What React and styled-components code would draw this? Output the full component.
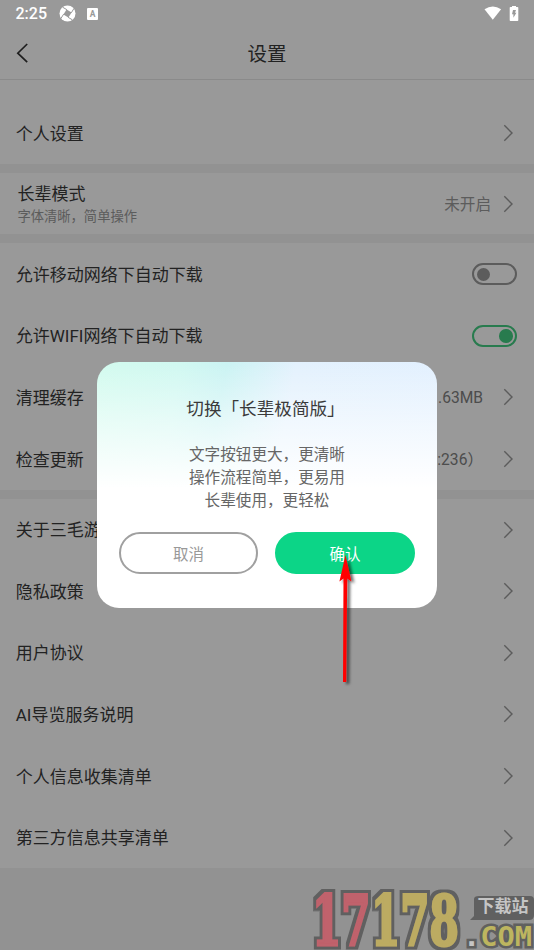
import React from 'react';
import styled, { createGlobalStyle } from 'styled-components';

const Global = createGlobalStyle`
  * { box-sizing: border-box; }
  body { margin: 0; background: #f3f3f3; font-family: Roboto, "Noto Sans CJK SC", sans-serif; color: #3a3a3a; }
`;
const Screen = styled.div`
  position: relative; width: 534px; height: 950px; overflow: hidden; background: #f3f3f3;
`;
const StatusBar = styled.div`
  position: relative; z-index: 3; height: 27px; padding: 0 15px 0 15.5px;
  display: flex; align-items: center; justify-content: space-between; color: #fff;
`;
const StatusGroup = styled.div`display: flex; align-items: center; gap: ${p => p.$gap}px;`;
const Clock = styled.span`font-size: 16px; font-weight: 500; line-height: 27px;`;
const Top = styled.div`background: #fff; height: 80px; border-bottom: 1px solid #e6e6e6;`;
const Header = styled.header`
  height: 52px; padding: 0 16px; display: grid; grid-template-columns: 20px 1fr 20px; align-items: center;
`;
const Title = styled.h1`margin: 0; padding-top: 3px; font-size: 19.5px; font-weight: 400; line-height: 28px; text-align: center;`;
const Section = styled.section`
  background: #fff; padding-top: ${p => p.$top || 0}px; margin-bottom: 9px;
`;
const Row = styled.div`
  height: ${p => p.$h || 61.6}px; padding: 0 17px 0 ${p => p.$left || 15.7}px;
  display: flex; align-items: center; justify-content: space-between;
`;
const Label = styled.div`padding-top: 1px; font-size: 17px; line-height: 24px; white-space: nowrap;`;
const Hint = styled.div`font-size: 13.3px; line-height: 21px; color: #999;`;
const Tail = styled.div`display: flex; align-items: center; gap: ${p => p.$gap || 12}px; padding-right: 3px;`;
const Value = styled.span`padding-top: 2px; font-size: 15.6px; line-height: 22px; color: ${p => (p.$soft ? '#999' : '#808080')};`;
const Switch = styled.div`
  width: 45px; height: 22px; border-radius: 11px; border: 2px solid ${p => (p.$on ? '#43cd82' : '#999')};
  padding: 0 2.5px; display: flex; align-items: center; justify-content: ${p => (p.$on ? 'flex-end' : 'flex-start')};
`;
const Knob = styled.div`width: 13.5px; height: 13.5px; border-radius: 50%; background: ${p => (p.$on ? '#43cd82' : '#999')};`;
const Overlay = styled.div`
  position: absolute; inset: 0; z-index: 2; background: rgba(0,0,0,.4);
  display: flex; justify-content: center; align-items: flex-start; padding-top: 362px;
`;
const Dialog = styled.div`
  width: 340px; height: 246px; border-radius: 22px; padding: 33px 22px 0;
  background:
    linear-gradient(to bottom, rgba(255,255,255,0) 0, rgba(255,255,255,.5) 60px, #fff 126px),
    linear-gradient(100deg, #d2fbee 0, #d0f8f1 22%, #caf3f3 34%, #e3f1fd 52%, #e2f0ff 100%);
`;
const DialogTitle = styled.h2`margin: 0; padding-right: 3px; font-size: 17.6px; line-height: 28px; font-weight: 400; text-align: center;`;
const DialogText = styled.p`margin: 21px 0 19px; font-size: 15.6px; line-height: 23px; color: #666; text-align: center;`;
const Actions = styled.div`display: flex; gap: 17px;`;
const Button = styled.button`
  flex: ${p => (p.$primary ? '0 0 140px' : '0 0 139px')}; height: 42px; border-radius: 21px; padding: 3px 0 0;
  font: 15.5px/22px Roboto, "Noto Sans CJK SC", sans-serif;
  border: 2px solid ${p => (p.$primary ? '#0cd587' : '#a0a0a0')};
  background: ${p => (p.$primary ? '#0cd587' : '#fff')}; color: ${p => (p.$primary ? '#fff' : '#999')};
`;
const Pointer = styled.svg`position: absolute; z-index: 4; left: 332px; top: 550px;`;
const Watermark = styled.svg`position: absolute; z-index: 4; left: 304px; top: 884px;`;

const Chevron = () => (
  <svg width="11" height="18" viewBox="0 0 11 18" fill="none" stroke="#999" strokeWidth="1.4"><path d="M1.3 1.3 9 9l-7.7 7.7" /></svg>
);

const Item = ({ label, value, gap, soft, hint, h, left }) => (
  <Row $h={h} $left={left}>
    <div><Label>{label}</Label>{hint && <Hint>{hint}</Hint>}</div>
    <Tail $gap={gap}>{value && <Value $soft={soft}>{value}</Value>}<Chevron /></Tail>
  </Row>
);
const Toggle = ({ label, on }) => (
  <Row><Label>{label}</Label><Switch $on={on}><Knob $on={on} /></Switch></Row>
);

const LogoDigits = ({ x, color, children }) => (
  <text transform={`translate(${x} 61) scale(.61 1)`} fontFamily="DejaVu Serif" fontWeight="700" fontSize="69"
    fill={color} stroke={color} strokeWidth="3" strokeLinejoin="miter">{children}</text>
);

export default function App() {
  return (
    <Screen>
      <Global />
      <Top>
        <StatusBar>
          <StatusGroup $gap={11.5}>
            <Clock>2:25</Clock>
            <svg width="17" height="17" viewBox="0 0 17 17">
              <circle cx="8.5" cy="8.5" r="8" fill="#fff" />
              <path d="M7.6 4.4 12.6 7.6 9.4 12.6 4.4 9.4Z" fill="#999" />
              <path d="M7.9 4.7 3.6 2.2M12.3 7.8 15 3.4M9.1 12.3l4.4 2.6M4.7 9.1 1.8 13.6" stroke="#999" strokeWidth="1" />
            </svg>
            <svg width="11" height="12" viewBox="0 0 11 12">
              <rect width="11" height="12" rx="1" fill="#fff" />
              <text x="5.5" y="8.8" textAnchor="middle" fontFamily="Roboto" fontSize="8.5" fontWeight="700" fill="#999">A</text>
            </svg>
          </StatusGroup>
          <StatusGroup $gap={7}>
            <svg width="18" height="15" viewBox="0 0 18 15"><path d="M.5 3.3Q8.8-2.2 17.1 3.3L8.8 13.8Z" fill="#fff" /></svg>
            <svg width="10" height="16" viewBox="0 0 10 16">
              <path d="M3 0h4v1h1.5q.8 0 .8.8v12.4q0 .8-.8.8h-7q-.8 0-.8-.8V1.8q0-.8.8-.8H3Z" fill="#fff" />
              <path d="M4 4h3L6 6.8h1.4l-3 5V8.3H3Z" fill="#999" />
            </svg>
          </StatusGroup>
        </StatusBar>
        <Header>
          <svg width="13" height="20" viewBox="0 0 13 20" fill="none" stroke="#333" strokeWidth="1.7"><path d="M11.2 1 1.8 10.2l9.4 9" /></svg>
          <Title>设置</Title>
        </Header>
      </Top>
      <Section $top={22.4}><Item label="个人设置" /></Section>
      <Section><Item label="长辈模式" hint="字体清晰，简单操作" value="未开启" soft h={61.5} left={17.4} /></Section>
      <Section>
        <Toggle label="允许移动网络下自动下载" />
        <Toggle label="允许WIFI网络下自动下载" on />
        <Item label="清理缓存" value=".63MB" gap={20} />
        <Item label="检查更新" value=":236）" gap={20} />
      </Section>
      <Section>
        {['关于三毛游', '隐私政策', '用户协议', 'AI导览服务说明', '个人信息收集清单', '第三方信息共享清单'].map(t => <Item key={t} label={t} />)}
      </Section>
      <Overlay>
        <Dialog>
          <DialogTitle>切换「长辈极简版」</DialogTitle>
          <DialogText>文字按钮更大，更清晰<br />操作流程简单，更易用<br />长辈使用，更轻松</DialogText>
          <Actions><Button>取消</Button><Button $primary>确认</Button></Actions>
        </Dialog>
      </Overlay>
      <Pointer width="30" height="142" viewBox="0 0 30 142">
        <defs><filter id="shade" x="-50%" width="220%"><feDropShadow dx="3" dy="2" stdDeviation="1.6" floodColor="#000" floodOpacity=".6" /></filter></defs>
        <path d="M13.5 5 7.4 31.5l4.1-3L11 132h3.2l1-103.5 4.2 3Z" fill="#f00" filter="url(#shade)" />
      </Pointer>
      <Watermark width="230" height="66" viewBox="0 0 230 66">
        <defs>
          <filter id="rim" x="-5%" y="-10%" width="110%" height="120%">
            <feMorphology in="SourceAlpha" operator="dilate" radius="3" result="wide" />
            <feFlood floodColor="#606060" /><feComposite in2="wide" operator="in" result="edge" />
            <feMerge><feMergeNode in="edge" /><feMergeNode in="SourceGraphic" /></feMerge>
          </filter>
        </defs>
        <g filter="url(#rim)">
          <LogoDigits x={8} color="#c0626c">17</LogoDigits>
          <LogoDigits x={67} color="#bcab62">178</LogoDigits>
        </g>
        <text x="159" y="62" fontFamily="DejaVu Sans Mono" fontWeight="700" fontSize="26" textLength="69" lengthAdjust="spacingAndGlyphs" fill="#bdb55f" stroke="#606060" strokeWidth="5" paintOrder="stroke"><tspan fill="#c5c5c5">.</tspan>COM</text>
        <path d="M170 15q0-3 5-3h51q4 0 4 4v15q0 5-5 5h-59l4-4Z" fill="#606060" />
        <text x="173.5" y="27.5" fontFamily="Noto Sans CJK SC" fontWeight="700" fontSize="17" fill="#c5c5c5">下载站</text>
      </Watermark>
    </Screen>
  );
}
